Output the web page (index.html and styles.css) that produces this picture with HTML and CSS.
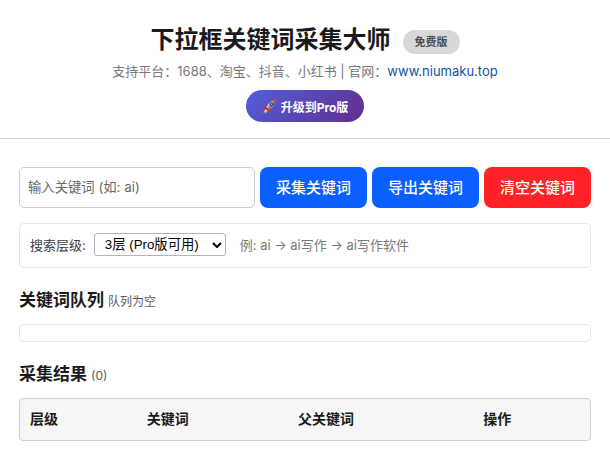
FILE: index.html
```html
<!DOCTYPE html>
<html lang="zh-CN">

<head>
  <meta charset="UTF-8">
  <title>下拉框关键词采集大师</title>
  <link rel="stylesheet" href="styles.css">
</head>

<body>
  <header class="header">
    <div class="title-row">
      <h1>下拉框关键词采集大师</h1>
      <span class="version-badge">免费版</span>
    </div>
    <p class="platforms">支持平台：1688、淘宝、抖音、小红书 | 官网：<a href="#">www.niumaku.top</a></p>
    <button type="button" class="upgrade-btn">
      <svg class="rocket" viewBox="0 0 32 32" aria-hidden="true">
        <path d="M10 19 L2 29 L6 28 L7 31 L15 23Z" fill="#ffb02e"/>
        <path d="M10 20 L5 27 L13 23Z" fill="#fff3a0"/>
        <path d="M13 12 Q6 11 3 20 L10 18Z" fill="#d9303e"/>
        <path d="M20 19 Q21 26 12 29 L14 22Z" fill="#d9303e"/>
        <path d="M9 18 Q14 5 26 3 Q29 15 14 23Z" fill="#b9c8d6"/>
        <path d="M14 23 L11 20 L27 5 Q28 15 14 23Z" fill="#6b8294"/>
        <path d="M22 4 Q26 1 31 1 Q31 6 28 10Z" fill="#e33b44"/>
        <circle cx="20" cy="11" r="4" fill="#26384c"/>
        <circle cx="20" cy="11" r="2" fill="#69b7ea"/>
        <path d="M8 17 L15 24 L12 25 L7 20Z" fill="#8c2431"/>
      </svg>
      升级到Pro版
    </button>
  </header>

  <main class="container">
    <div class="input-group">
      <input type="text" id="keyword" class="keyword-input" placeholder="输入关键词 (如: ai)" aria-label="输入关键词">
      <button type="button" class="btn">采集关键词</button>
      <button type="button" class="btn">导出关键词</button>
      <button type="button" class="btn btn-danger">清空关键词</button>
    </div>

    <div class="depth-box">
      <label for="depth">搜索层级:</label>
      <div class="select-wrap">
        <select id="depth">
          <option>1层</option>
          <option>2层</option>
          <option selected>3层 (Pro版可用)</option>
        </select>
        <svg class="arrow" viewBox="0 0 10 6" aria-hidden="true"><path d="M1 1 L5 5 L9 1" fill="none" stroke="#000" stroke-width="2"/></svg>
      </div>
      <span class="example">例: ai → ai写作 → ai写作软件</span>
    </div>

    <h2>关键词队列 <span class="status">队列为空</span></h2>
    <div class="queue"></div>

    <h2>采集结果 <span class="status">(0)</span></h2>
    <div class="table-wrap">
      <table>
        <thead>
          <tr>
            <th class="col-level">层级</th>
            <th class="col-keyword">关键词</th>
            <th class="col-parent">父关键词</th>
            <th>操作</th>
          </tr>
        </thead>
        <tbody></tbody>
      </table>
    </div>
  </main>
</body>

</html>
```
FILE: styles.css
```css
* {
  box-sizing: border-box;
}
body {
  margin: 0;
  background: #fff;
  color: #1a1a1c;
  font-family: Inter, "Noto Sans CJK SC", sans-serif;
  font-size: 13px;
  line-height: 20px;
}
.header {
  padding: 22px 20px 16px;
  border-bottom: 1px solid #d2d2d4;
  text-align: center;
}
.title-row {
  display: flex;
  justify-content: center;
  align-items: center;
  gap: 12px;
}
h1 {
  margin: 0;
  font-size: 24px;
  line-height: 36px;
  font-weight: 700;
}
.version-badge {
  margin-top: 4px;
  padding: 2px 12px;
  border-radius: 12px;
  background: #d8d8d8;
  color: #4a4a4c;
  font-size: 11px;
  font-weight: 700;
}
.platforms {
  margin: 3px 0 9px;
  color: #78787c;
}
.platforms a {
  color: #1450a0;
  text-decoration: none;
}
button {
  border: none;
  font-family: inherit;
  cursor: pointer;
}
.upgrade-btn {
  display: inline-flex;
  align-items: center;
  gap: 4px;
  height: 32px;
  padding: 0 16px;
  border-radius: 16px;
  background: linear-gradient(135deg, #4f5fdc, #632e8c);
  color: #fff;
  font-size: 12px;
  font-weight: 700;
}
.rocket {
  width: 15px;
  height: 15px;
}
.container {
  padding: 28px 19px 10px;
}
.input-group {
  display: flex;
  gap: 5px;
  margin-bottom: 15px;
}
.keyword-input {
  flex: 1;
  min-width: 0;
  height: 41px;
  padding: 0 8px 2px;
  border: 1px solid #cfcfd1;
  border-radius: 5px;
  background: #fff;
  font-family: inherit;
}
.keyword-input::placeholder {
  color: #68686a;
}
.btn {
  height: 41px;
  padding: 0 16px 2px;
  border-radius: 8px;
  background: #0a60ff;
  color: #fff;
  font-size: 15px;
  font-weight: 500;
}
.btn-danger {
  background: #ff2328;
}
.depth-box {
  display: flex;
  align-items: center;
  height: 45px;
  padding: 0 10px 2px;
  border: 1px solid #e6e6e8;
  border-radius: 5px;
}
.depth-box label {
  margin-right: 8px;
  color: #3c3c3e;
}
.select-wrap {
  display: grid;
  align-items: center;
  margin-right: 14px;
}
.select-wrap > * {
  grid-area: 1 / 1;
}
select {
  appearance: none;
  width: 132px;
  height: 23px;
  padding: 0 10px;
  border: 1px solid #b4b4b6;
  border-radius: 3px;
  background: #fff;
  color: #000;
  font-family: "Liberation Sans", "Noto Sans CJK SC", sans-serif;
}
.arrow {
  justify-self: end;
  width: 10px;
  height: 6px;
  margin-right: 4px;
  pointer-events: none;
}
.example {
  color: #78787a;
}
h2 {
  margin: 20px 0 10px;
  font-size: 17px;
  line-height: 24px;
  font-weight: 700;
}
.status {
  color: #5a5a5c;
  font-size: 12px;
  font-weight: 400;
}
.queue {
  min-height: 18px;
  border: 1px solid #e6e6e8;
  border-radius: 5px;
}
.table-wrap {
  border: 1px solid #d0d0d2;
  border-radius: 4px;
  background: #f6f6f7;
  overflow: hidden;
}
table {
  width: 100%;
  border-collapse: collapse;
  table-layout: fixed;
}
th {
  padding: 9px 10px 11px;
  font-size: 14px;
  line-height: 21px;
  font-weight: 700;
  text-align: left;
}
.col-level {
  width: 20.5%;
}
.col-keyword {
  width: 26.5%;
}
.col-parent {
  width: 32.5%;
}
```
